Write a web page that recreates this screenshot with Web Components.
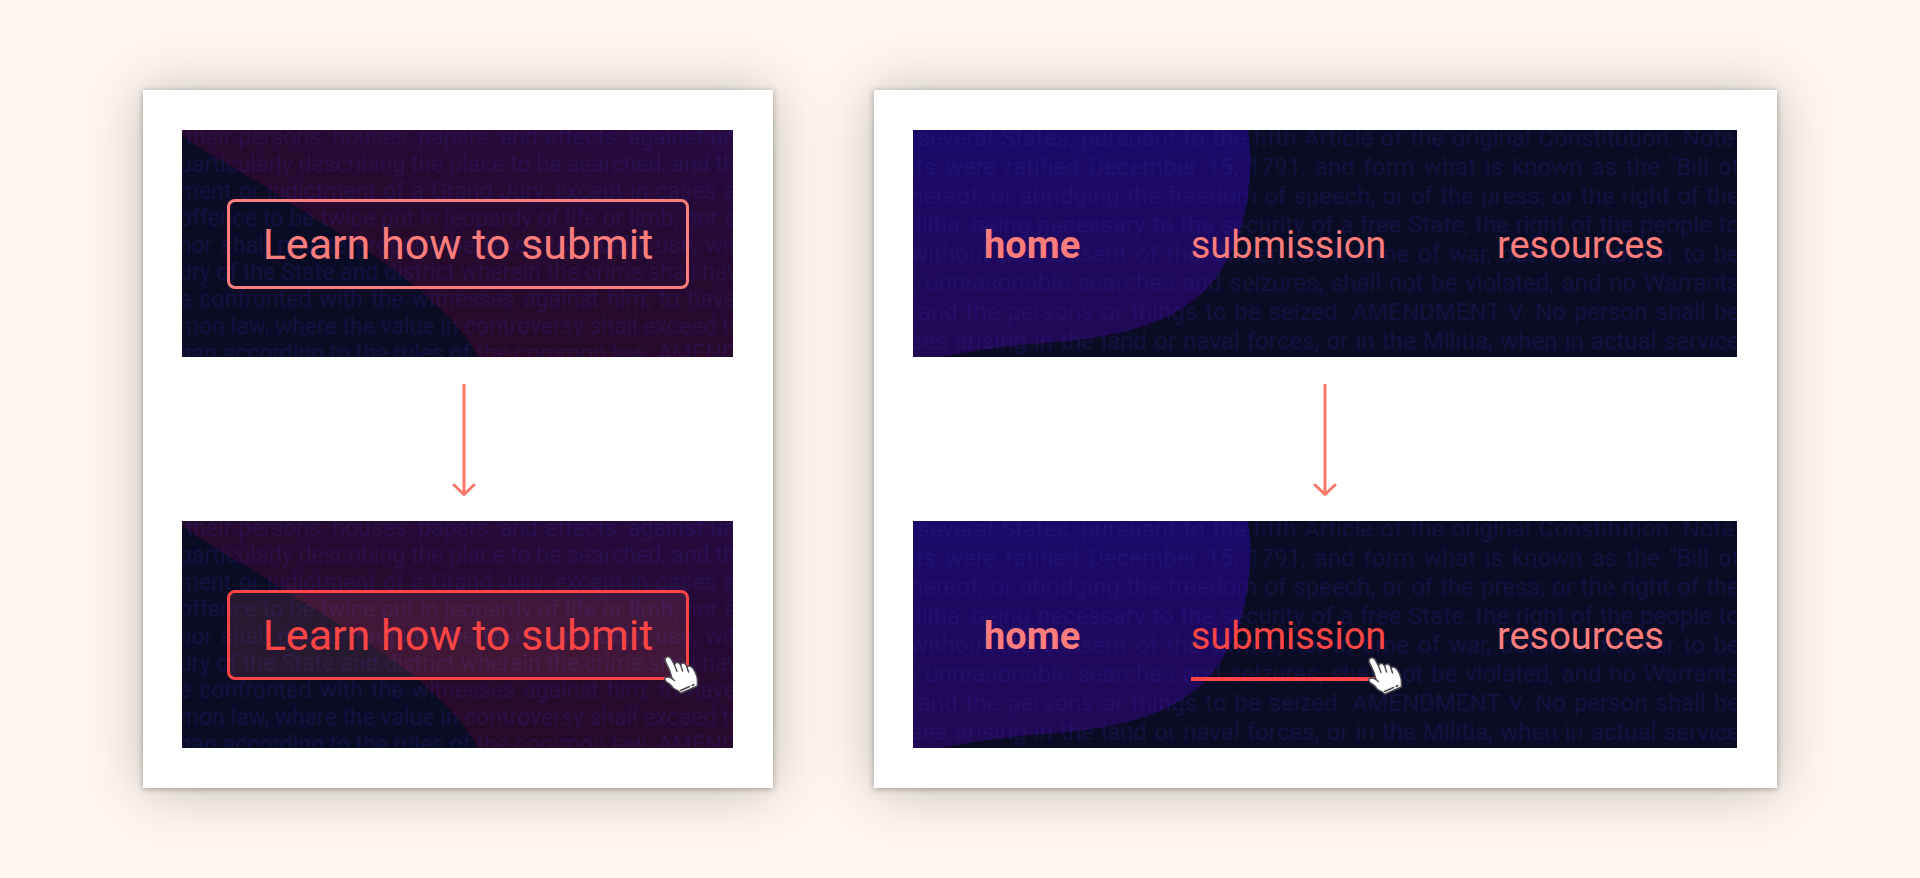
<!DOCTYPE html>
<html lang="en">
<head>
<meta charset="utf-8">
<title>Hover states</title>
<style>
  body { margin: 0; background: #fff7f1; font-family: Roboto, "Liberation Sans", sans-serif; }
</style>
</head>
<body>
<state-board>
  <state-card style="--arrow-indent: 12px">
    <text-panel scene="dusk"><action-button>Learn how to submit</action-button></text-panel>
    <down-arrow></down-arrow>
    <text-panel scene="dusk"><action-button hovered>Learn how to submit</action-button></text-panel>
  </state-card>
  <state-card>
    <text-panel scene="night">
      <site-nav>
        <nav-link current>home</nav-link>
        <nav-link>submission</nav-link>
        <nav-link>resources</nav-link>
      </site-nav>
    </text-panel>
    <down-arrow></down-arrow>
    <text-panel scene="night">
      <site-nav>
        <nav-link current>home</nav-link>
        <nav-link hovered>submission</nav-link>
        <nav-link>resources</nav-link>
      </site-nav>
    </text-panel>
  </state-card>
</state-board>
<script>
function define(name, html, setup) {
  const template = document.createElement('template');
  template.innerHTML = html;
  customElements.define(name, class extends HTMLElement {
    constructor() {
      super();
      this.attachShadow({ mode: 'open' }).append(template.content.cloneNode(true));
    }
    connectedCallback() { if (setup) setup(this, this.shadowRoot); }
  });
}

define('state-board', `
  <style>
    :host { display: block; }
    main { display: grid; grid-template-columns: 630fr 903fr; gap: 101px; padding: 90px 143px; align-items: start; }
  </style>
  <main><slot></slot></main>`);

define('state-card', `
  <style>
    :host { display: block; min-width: 0; }
    section { background: #fff; padding: 40px 40px 40px 39px;
      box-shadow: 0 1px 6px rgba(50, 50, 45, .4), 0 2px 54px rgba(75, 80, 70, .34); }
  </style>
  <section><slot></slot></section>`);

define('down-arrow', `
  <style>
    :host { display: flex; justify-content: center; padding: 27px 0 24px var(--arrow-indent, 0); }
    svg { display: block; }
  </style>
  <svg width="24" height="113" viewBox="0 0 24 113" fill="none" stroke="#f87767" stroke-width="3" aria-hidden="true">
    <path d="M12 0V110"/><path d="M2 101L12 110.500L22 101" stroke-linecap="round" stroke-linejoin="round"/>
  </svg>`);

const scenes = {
  dusk: {
    lines: [
      '\u00a0their persons, houses, papers, and effects, against un',
      'particularly describing the place to be searched, and th',
      'ment or indictment of a Grand Jury, except in cases a',
      'offence to be twice put in jeopardy of life or limb; nor s',
      'nor shall private property be taken for public use, wit',
      'ury of the State and district wherein the crime shall hav',
      'e confronted with the witnesses against him; to have',
      'mon law, where the value in controversy shall exceed tw',
      'han according to the rules of the common law. AMEND'
    ],
    art: `<svg width="100%" height="227" aria-hidden="true">
      <defs><linearGradient id="g" x1="1" y1="0" x2=".3" y2=".9">
        <stop offset="0" stop-color="#260a42"/><stop offset=".5" stop-color="#270a30"/><stop offset="1" stop-color="#280a29"/>
      </linearGradient></defs>
      <rect width="100%" height="227" fill="url(#g)"/>
      <path d="M0 5C28 26 68 46 99 67C145 97 190 121 229 153C258 177 282 200 296 227H0Z" fill="#0a0c26"/>
    </svg>`
  },
  night: {
    lines: [
      '\u00a0several States, pursuant to the fifth Article of the original Constitution. Note:',
      'its were ratified December 15, 1791, and form what is known as the "Bill of',
      'hereof; or abridging the freedom of speech, or of the press; or the right of the',
      'illitia, being necessary to the security of a free State, the right of the people to',
      'without the consent of the Owner, nor in time of war, but in a manner to be',
      '\u00a0\u00a0unreasonable searches and seizures, shall not be violated, and no Warrants',
      '\u00a0and the persons or things to be seized. AMENDMENT V. No person shall be',
      'ses arising in the land or naval forces, or in the Militia, when in actual service'
    ],
    art: `<svg width="100%" height="227" aria-hidden="true">
      <defs><linearGradient id="g" x1="0" y1="0" x2="0" y2="1">
        <stop offset="0" stop-color="#1a0a68"/><stop offset="1" stop-color="#220954"/>
      </linearGradient></defs>
      <rect width="100%" height="227" fill="#0a0c26"/>
      <path d="M0 0H335Q340 30 335 63C330 101 319 132 289 163C256 194 205 207 143 212C100 215 60 220 28 227H0Z" fill="url(#g)"/>
    </svg>`
  }
};

define('text-panel', `
  <style>
    :host { display: grid; grid-template: minmax(227px, auto) / minmax(0, 1fr); overflow: hidden; background: #0a0c26; }
    .art, .prose, .content { grid-area: 1 / 1; }
    .art svg { display: block; }
    .prose { height: 0; margin: -6px -3px 0; color: rgba(56, 42, 175, .2); font-size: 23px; line-height: 27px; }
    :host([scene="night"]) .prose { font-size: 24px; line-height: 29px; }
    .prose p { margin: 0; white-space: nowrap; text-align: justify; text-align-last: justify; }
    .content { position: relative; }
  </style>
  <div class="art"></div><div class="prose"></div><div class="content"><slot></slot></div>`,
  (host, root) => {
    const scene = scenes[host.getAttribute('scene')];
    root.querySelector('.art').innerHTML = scene.art;
    root.querySelector('.prose').replaceChildren(...scene.lines.map(line => {
      const p = document.createElement('p');
      p.textContent = line;
      return p;
    }));
  });

define('hand-cursor', `
  <style>:host { display: block; } svg { display: block; overflow: visible; }</style>
  <svg width="34" height="38" viewBox="0 0 34 38" aria-hidden="true">
    <path d="M1 4.500C.5 2 2 .7 4 .7C6 .7 7 2 7.800 4L10.500 9C10.800 7 12 6.200 13.600 6.500C15.500 6.800 16 8 16.700 9.200C17.200 7.400 18.500 6.600 20.200 7.200C22 7.700 22.500 9.200 23 11C24 9.800 26 9.800 27.500 11C29.600 12.800 31.800 17 32.800 20.500C33.600 23 33.600 26 33.400 30L16.800 37.300L14 34.800C11 33.500 9 32.500 8 30.500C6.500 28 4 27.500 2 25.500C.5 23.700 .3 22.300 1.500 21.500C3 20.600 6 21.200 8 22.500C7 17.500 5 12.500 3 8.800C2 7 1.300 6 1 4.500Z" fill="#fff" stroke="#4c4750" stroke-width="1.500" stroke-linejoin="round"/>
    <path d="M10.500 9L13 15.500M16.700 9.200L18.600 15M23 11L24.500 16M8 22.500L10.500 24.500M16.500 34.500L25.500 30.500M28 29.500L30 28.500" fill="none" stroke="#4c4750" stroke-width="1.400" stroke-linecap="round"/>
  </svg>`);

define('action-button', `
  <style>
    :host { display: block; padding: 69px 44px 68px 45px; }
    button { position: relative; display: block; box-sizing: border-box; width: 100%; padding: 18px 0;
      border: 3px solid #ff7d7d; border-radius: 8px; background: none; color: #ff7d7d;
      font: 400 43px/48px Roboto, "Liberation Sans", sans-serif; text-align: center; white-space: nowrap; }
    hand-cursor { display: none; position: absolute; right: -12px; bottom: -17px; }
    :host([hovered]) button { border-color: #ff4545; color: #ff4545; background: rgba(255, 125, 125, .12); }
    :host([hovered]) hand-cursor { display: block; }
  </style>
  <button type="button"><slot></slot><hand-cursor></hand-cursor></button>`);

define('site-nav', `
  <style>
    :host { display: block; }
    nav { display: flex; justify-content: space-between; padding: 93px 73px 67px 71px; }
  </style>
  <nav><slot></slot></nav>`);

define('nav-link', `
  <style>
    :host { display: block; }
    a { position: relative; display: block; padding-bottom: 19px; border-bottom: 4px solid transparent;
      color: #ff7d7d; font-size: 38px; line-height: 44px; text-decoration: none; }
    hand-cursor { display: none; position: absolute; right: -16px; bottom: -18px; }
    :host([current]) a { font-weight: 700; }
    :host([hovered]) a { color: #ff4545; border-color: #ff4545; }
    :host([hovered]) hand-cursor { display: block; }
  </style>
  <a href="#"><slot></slot><hand-cursor></hand-cursor></a>`);
</script>
</body>
</html>
